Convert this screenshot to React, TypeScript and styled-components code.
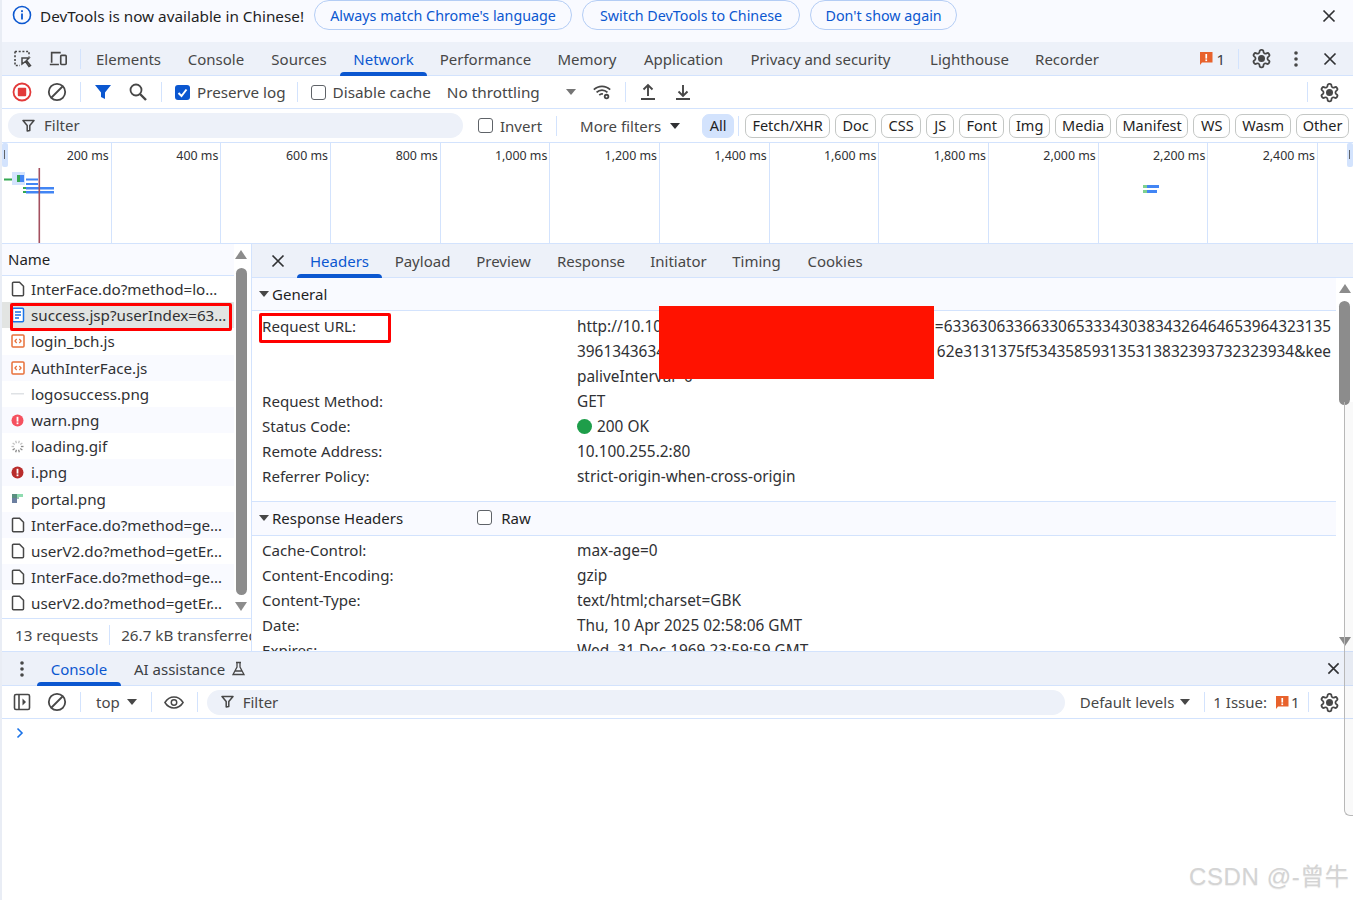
import React from "react";
import styled, { createGlobalStyle } from "styled-components";

const Global = createGlobalStyle`
  html, body { margin: 0; padding: 0; background: #fff; }
  body { font-family: "Noto Sans", "Open Sans", sans-serif; color: #3c4043; overflow: hidden; }
  * { box-sizing: border-box; }
`;

const Page = styled.div`
  position: relative; width: 1353px; height: 900px; display: flex; flex-direction: column;
  border-left: 2px solid #e9edf5; overflow: hidden; font-size: 15px; white-space: nowrap;
`;
const InfoBar = styled.div`
  height: 42px; flex: none; background: #f9faff; display: flex; align-items: flex-start; padding: 0 14px 0 10px; color: #1f1f1f;
`;
const InfoText = styled.span`margin: 6px 10px 0 8px; line-height: 20px; font-size: 15.3px;`;
const InfoButton = styled.button<{ $w: number }>`
  width: ${(p) => p.$w}px; height: 30px; border: 1px solid #b4cdf5; border-radius: 15px; background: transparent; color: #0b57d0; font: inherit; font-size: 14.3px; padding: 0; margin-right: 10px;
`;
const Spacer = styled.div`flex: 1;`;
const IconBtn = styled.span<{ $ml?: number; $mt?: number }>`
  display: inline-flex; width: 20px; height: 20px; align-items: center; justify-content: center; flex: none; margin-left: ${(p) => p.$ml ?? 0}px; margin-top: ${(p) => p.$mt ?? 0}px;
`;
const TabBar = styled.div`
  height: 34px; flex: none; background: #edf1f9; border-bottom: 1px solid #d3e3fd; display: flex; align-items: center; padding-left: 11px; position: relative;
`;
const Sep = styled.div<{ $h?: number; $ml?: number; $mr?: number }>`
  width: 1px; height: ${(p) => p.$h ?? 20}px; background: #d3e3fd; flex: none; margin-left: ${(p) => p.$ml ?? 8}px; margin-right: ${(p) => p.$mr ?? 8}px;
`;
const Tab = styled.div<{ $active?: boolean; $w: number; $mr?: number }>`
  width: ${(p) => p.$w}px; margin-right: ${(p) => p.$mr ?? 0}px; flex: none; height: 100%; display: flex; align-items: center; justify-content: center; position: relative;
  color: ${(p) => (p.$active ? "#0b57d0" : "#474747")};
  &::after { content: ""; display: ${(p) => (p.$active ? "block" : "none")}; position: absolute; left: 0; right: 0; bottom: -1px; height: 4px; background: #0b57d0; border-radius: 4px 4px 0 0; }
`;
const Toolbar = styled.div<{ $h: number }>`
  height: ${(p) => p.$h}px; flex: none; background: #fff; border-bottom: 1px solid #d3e3fd; display: flex; align-items: center; padding-left: 10px; color: #474747;
`;
const Check = styled.span<{ $on?: boolean; $ml?: number }>`
  width: 15px; height: 15px; border-radius: 3px; flex: none; display: inline-flex; align-items: center; justify-content: center; margin: 0 7px 0 ${(p) => p.$ml ?? 0}px;
  border: ${(p) => (p.$on ? "none" : "1.3px solid #5f6368")}; background: ${(p) => (p.$on ? "#0b57d0" : "#fff")};
`;
const Label = styled.span<{ $ml?: number; $w?: number; $fs?: number }>`
  margin-left: ${(p) => p.$ml ?? 0}px; ${(p) => (p.$w ? `width:${p.$w}px;` : "")} ${(p) => (p.$fs ? `font-size:${p.$fs}px;` : "")} flex: none;
`;
const Caret = styled.span<{ $ml?: number; $c?: string }>`
  width: 0; height: 0; flex: none; border-left: 5px solid transparent; border-right: 5px solid transparent; border-top: 6px solid ${(p) => p.$c ?? "#474747"}; margin-left: ${(p) => p.$ml ?? 0}px;
`;
const FilterBar = styled.div`
  height: 34px; flex: none; border-bottom: 1px solid #d3e3fd; display: flex; align-items: center; padding-left: 6px; color: #474747;
`;
const FilterInput = styled.div<{ $w: number }>`
  width: ${(p) => p.$w}px; height: 25px; border-radius: 13px; background: #edf1f9; display: flex; align-items: center; padding: 0 0 1px 14px; gap: 9px; flex: none; color: #474747;
`;
const Chip = styled.span<{ $active?: boolean; $w: number; $mr?: number }>`
  width: ${(p) => p.$w}px; height: 24px; display: inline-flex; align-items: center; justify-content: center; flex: none; border-radius: 7px; margin-right: ${(p) => p.$mr ?? 5}px; color: #1f1f1f; font-size: 14.5px; padding-bottom: 1px;
  border: 1px solid ${(p) => (p.$active ? "#d3e3fd" : "#c4c7c5")}; background: ${(p) => (p.$active ? "#d3e3fd" : "#fff")};
`;
const Timeline = styled.div`
  height: 101px; flex: none; display: grid; grid-template-columns: repeat(12, 109.68px) 1fr; border-bottom: 1px solid #d3e3fd; position: relative;
`;
const Tick = styled.div`
  border-right: 1px solid #d3e3fd; text-align: right; font-size: 12.4px; padding: 4px 2px 0 0; line-height: 17px; color: #303134;
`;
const Handle = styled.span<{ $left: number }>`
  position: absolute; top: 0; left: ${(p) => p.$left}px; width: 6px; height: 24px; background: #d3e3fd; border-radius: 2px;
  &::after { content: ""; position: absolute; left: 2px; top: 7px; width: 1px; height: 9px; background: #5f6368; }
`;
const Wave = styled.svg`position: absolute; left: 0; top: 0;`;
const Split = styled.div`height: 407px; flex: none; display: flex; position: relative;`;
const ListPane = styled.div`
  width: 250px; flex: none; border-right: 1px solid #d3e3fd; display: flex; flex-direction: column; position: relative;
`;
const ListHead = styled.div`
  height: 32px; flex: none; display: flex; align-items: center; padding: 0 0 2px 6px; background: #f9faff; border-bottom: 1px solid #d3e3fd; width: 232px; color: #1f1f1f;
`;
const Rows = styled.div`width: 232px; flex: 1; display: flex; flex-direction: column; font-size: 15.2px;`;
const Row = styled.div<{ $odd?: boolean; $sel?: boolean }>`
  height: 26.2px; flex: none; display: flex; align-items: center; gap: 6px; padding-left: 8px; color: #303134;
  background: ${(p) => (p.$sel ? "#e2e4e2" : p.$odd ? "#f9faff" : "#fff")};
`;
const RowIcon = styled.span`width: 15px; height: 16px; flex: none; display: inline-flex; align-items: center; justify-content: center;`;
const ListStatus = styled.div`
  height: 33px; flex: none; border-top: 1px solid #d3e3fd; display: flex; align-items: center; padding-left: 13px; color: #474747; overflow: hidden; font-size: 15.2px;
`;
const VScroll = styled.div<{ $top: number; $left: number; $h: number }>`
  position: absolute; left: ${(p) => p.$left}px; top: ${(p) => p.$top}px; width: 11px; height: ${(p) => p.$h}px; background: #8c8c8c; border-radius: 6px;
`;
const Arrow = styled.span<{ $left: number; $top: number; $up?: boolean }>`
  position: absolute; left: ${(p) => p.$left}px; top: ${(p) => p.$top}px; width: 0; height: 0; border-left: 6px solid transparent; border-right: 6px solid transparent;
  ${(p) => (p.$up ? "border-bottom: 9px solid #8c8c8c;" : "border-top: 9px solid #8c8c8c;")}
`;
const Detail = styled.div`flex: 1; min-width: 0; display: flex; flex-direction: column; overflow: hidden; position: relative;`;
const DetailTabs = styled(TabBar)`padding-left: 16px; height: 34px;`;
const DetailBody = styled.div`flex: 1; min-height: 0; overflow: hidden; width: 1084px;`;
const SectionHead = styled.div`
  height: 33px; display: flex; align-items: center; background: #f9faff; border-bottom: 1px solid #d3e3fd; padding-left: 7px; color: #1f1f1f;
`;
const SectionHeadGap = styled(SectionHead)`border-top: 1px solid #d3e3fd; height: 35px; margin-top: 12px; padding-bottom: 2px;`;
const KV = styled.div<{ $pt: number }>`display: grid; grid-template-columns: 315px 1fr; padding: ${(p) => p.$pt}px 0 0 10px; color: #303134; font-size: 15.1px;`;
const Key = styled.div`line-height: 25px; height: 25px;`;
const Val = styled.div`line-height: 25px; height: 25px; display: flex; align-items: center; gap: 5px; font-size: 15.4px;`;
const UrlVal = styled.div`line-height: 25px; height: 75px; white-space: pre; display: flex; flex-direction: column; width: 754px; font-size: 15.4px;`;
const UrlLine = styled.div`display: flex; justify-content: space-between;`;
const StatusDot = styled.span`width: 15px; height: 15px; border-radius: 50%; background: #1e9e4a; flex: none;`;
const Redact = styled.div`position: absolute; left: 657px; top: 306px; width: 275px; height: 73px; background: #ff1200;`;
const Annot = styled.div<{ $l: number; $t: number; $w: number; $h: number }>`
  position: absolute; left: ${(p) => p.$l}px; top: ${(p) => p.$t}px; width: ${(p) => p.$w}px; height: ${(p) => p.$h}px; border: 3px solid #ff0000; border-radius: 2px;
`;
const DrawerBar = styled(TabBar)`border-top: 1px solid #d3e3fd; height: 35px; padding-left: 13px;`;
const ConsoleArea = styled.div`flex: 1; padding: 4px 0 0 14px; background: #fff;`;
const Track = styled.div`
  position: absolute; left: 1342px; top: 402px; width: 10px; height: 414px; border-left: 1px solid #b8b8b8; border-bottom: 1px solid #b8b8b8; border-radius: 0 0 0 6px; background: rgba(0, 0, 0, .025);
`;
const Watermark = styled.div`
  position: absolute; left: 1187px; top: 861px; font-family: "Liberation Sans", "Noto Sans CJK SC", sans-serif; font-size: 24px; line-height: 32px; color: #d4d4d4; letter-spacing: .6px; text-shadow: 0 1px 1px #eee;
`;

const S = { fill: "none", stroke: "#474747", strokeWidth: 1.6 };
const Close = ({ size = 14, c = "#303134" }: { size?: number; c?: string }) => (
  <svg width={size} height={size} viewBox="0 0 14 14"><path d="M1.5 1.5l11 11M12.5 1.5l-11 11" fill="none" stroke={c} strokeWidth="1.7" /></svg>
);
const Gear = () => (
  <svg width="21" height="21" viewBox="0 0 24 24" fill="none" stroke="#474747" strokeWidth="2"><path d="M12.22 2h-.44a2 2 0 0 0-2 2v.18a2 2 0 0 1-1 1.73l-.43.25a2 2 0 0 1-2 0l-.15-.08a2 2 0 0 0-2.73.73l-.22.38a2 2 0 0 0 .73 2.73l.15.1a2 2 0 0 1 1 1.72v.51a2 2 0 0 1-1 1.74l-.15.09a2 2 0 0 0-.73 2.73l.22.38a2 2 0 0 0 2.73.73l.15-.08a2 2 0 0 1 2 0l.43.25a2 2 0 0 1 1 1.73V20a2 2 0 0 0 2 2h.44a2 2 0 0 0 2-2v-.18a2 2 0 0 1 1-1.73l.43-.25a2 2 0 0 1 2 0l.15.08a2 2 0 0 0 2.73-.73l.22-.39a2 2 0 0 0-.73-2.73l-.15-.08a2 2 0 0 1-1-1.74v-.5a2 2 0 0 1 1-1.74l.15-.09a2 2 0 0 0 .73-2.73l-.22-.38a2 2 0 0 0-2.73-.73l-.15.08a2 2 0 0 1-2 0l-.43-.25a2 2 0 0 1-1-1.73V4a2 2 0 0 0-2-2z" /><circle cx="12" cy="12" r="3" fill="#474747" /></svg>
);
const Dots = () => (
  <svg width="4" height="16" viewBox="0 0 4 16"><circle cx="2" cy="2" r="1.8" fill="#474747" /><circle cx="2" cy="8" r="1.8" fill="#474747" /><circle cx="2" cy="14" r="1.8" fill="#474747" /></svg>
);
const Block = () => (
  <svg width="20" height="20" viewBox="0 0 20 20"><circle cx="10" cy="10" r="8.2" fill="none" stroke="#474747" strokeWidth="1.8" /><path d="M4.5 15.5l11-11" fill="none" stroke="#474747" strokeWidth="1.8" /></svg>
);
const Funnel = ({ c = "#474747" }: { c?: string }) => (
  <svg width="13" height="13" viewBox="0 0 13 13"><path d="M1 1.5h11L7.8 6.6v5L5.2 12V6.6z" fill="none" stroke={c} strokeWidth="1.5" strokeLinejoin="round" /></svg>
);
const IssueIcon = () => (
  <svg width="14" height="15" viewBox="0 0 14 15"><path d="M1 1h12.5v10.5H3L1 14z" fill="#e8622c" /><rect x="6.4" y="3" width="1.7" height="4.6" fill="#fff" /><rect x="6.4" y="8.4" width="1.7" height="1.7" fill="#fff" /></svg>
);
const DocIcon = () => (
  <svg width="14" height="16" viewBox="0 0 14 16"><path d="M1.5 2.2a1 1 0 0 1 1-1h6l4 4v8.6a1 1 0 0 1-1 1h-9a1 1 0 0 1-1-1z" fill="#fff" stroke="#474747" strokeWidth="1.5" /></svg>
);
const HtmlIcon = () => (
  <svg width="14" height="16" viewBox="0 0 14 16"><rect x="1.5" y="1.2" width="11" height="13.6" rx="1" fill="#fff" stroke="#1a73e8" strokeWidth="1.5" /><path d="M4 5h6M4 8h6M4 11h4" stroke="#1a73e8" strokeWidth="1.4" /></svg>
);
const JsIcon = () => (
  <svg width="14" height="14" viewBox="0 0 14 14"><rect x="1" y="1" width="12" height="12" rx="1" fill="#fff" stroke="#e8703a" strokeWidth="1.5" /><path d="M5.7 5L3.9 7l1.8 2M8.3 5l1.8 2-1.8 2" fill="none" stroke="#e8703a" strokeWidth="1.2" /></svg>
);
const RedIcon = ({ c }: { c: string }) => (
  <svg width="13" height="13" viewBox="0 0 13 13"><circle cx="6.5" cy="6.5" r="6" fill={c} /><rect x="5.6" y="2.8" width="1.8" height="4.8" fill="#fff" /><rect x="5.6" y="8.4" width="1.8" height="1.8" fill="#fff" /></svg>
);
const Spinner = () => (
  <svg width="13" height="13" viewBox="0 0 13 13">
    {Array.from({ length: 10 }).map((_, i) => {
      const a = (i / 10) * Math.PI * 2;
      return <path key={i} d={`M${6.5 + Math.cos(a) * 3.4} ${6.5 + Math.sin(a) * 3.4}L${6.5 + Math.cos(a) * 6} ${6.5 + Math.sin(a) * 6}`} stroke={i < 5 ? "#8a8a8a" : "#c4c4c4"} strokeWidth="1.3" />;
    })}
  </svg>
);
const PortalIcon = () => (
  <svg width="13" height="13" viewBox="0 0 13 13"><rect x="1" y="2" width="5" height="4" fill="#5a8f80" /><rect x="6" y="2" width="6" height="3" fill="#8fdcb0" /><rect x="1" y="6" width="5" height="5" fill="#6c7fa0" /><rect x="6" y="5" width="2" height="2" fill="#9cc8b4" /></svg>
);
const LogoIcon = () => <svg width="13" height="4" viewBox="0 0 13 4"><rect x="0" y="1" width="13" height="1.5" fill="#dfe2e5" /></svg>;

const tabs: [string, number, boolean?, number?][] = [["Elements", 91], ["Console", 84], ["Sources", 82], ["Network", 87, true], ["Performance", 117], ["Memory", 86], ["Application", 107], ["Privacy and security", 167, false, 13], ["Lighthouse", 105], ["Recorder", 90]];
const chips: [string, number][] = [["Fetch/XHR", 85], ["Doc", 41], ["CSS", 40], ["JS", 28], ["Font", 45], ["Img", 41], ["Media", 56], ["Manifest", 72], ["WS", 37], ["Wasm", 56], ["Other", 53]];
const ticks = ["200", "400", "600", "800", "1,000", "1,200", "1,400", "1,600", "1,800", "2,000", "2,200", "2,400"];
const rows: [React.ReactNode, string][] = [
  [<DocIcon />, "InterFace.do?method=lo…"],
  [<HtmlIcon />, "success.jsp?userIndex=63…"],
  [<JsIcon />, "login_bch.js"],
  [<JsIcon />, "AuthInterFace.js"],
  [<LogoIcon />, "logosuccess.png"],
  [<RedIcon c="#f5515f" />, "warn.png"],
  [<Spinner />, "loading.gif"],
  [<RedIcon c="#b92c2c" />, "i.png"],
  [<PortalIcon />, "portal.png"],
  [<DocIcon />, "InterFace.do?method=ge…"],
  [<DocIcon />, "userV2.do?method=getEr…"],
  [<DocIcon />, "InterFace.do?method=ge…"],
  [<DocIcon />, "userV2.do?method=getEr…"],
];
const detailTabs: [string, number, boolean?][] = [["Headers", 85, true], ["Payload", 81], ["Preview", 81], ["Response", 94], ["Initiator", 81], ["Timing", 75], ["Cookies", 82]];
const general: [string, React.ReactNode][] = [
  ["Request Method:", "GET"],
  ["Status Code:", <><StatusDot />200 OK</>],
  ["Remote Address:", "10.100.255.2:80"],
  ["Referrer Policy:", "strict-origin-when-cross-origin"],
];
const resp: [string, string][] = [
  ["Cache-Control:", "max-age=0"],
  ["Content-Encoding:", "gzip"],
  ["Content-Type:", "text/html;charset=GBK"],
  ["Date:", "Thu, 10 Apr 2025 02:58:06 GMT"],
  ["Expires:", "Wed, 31 Dec 1969 23:59:59 GMT"],
];

export default function App() {
  return (
    <Page>
      <Global />
      <InfoBar>
        <IconBtn $mt={5}><svg width="20" height="20" viewBox="0 0 20 20"><circle cx="10" cy="10" r="8.5" fill="none" stroke="#0b57d0" strokeWidth="1.6" /><rect x="9.1" y="8.5" width="1.8" height="6" fill="#0b57d0" /><rect x="9.1" y="5.2" width="1.8" height="1.9" fill="#0b57d0" /></svg></IconBtn>
        <InfoText>DevTools is now available in Chinese!</InfoText>
        <InfoButton $w={258}>Always match Chrome's language</InfoButton>
        <InfoButton $w={218}>Switch DevTools to Chinese</InfoButton>
        <InfoButton $w={147}>Don't show again</InfoButton>
        <Spacer />
        <IconBtn $mt={6}><Close /></IconBtn>
      </InfoBar>
      <TabBar>
        <IconBtn><svg width="20" height="20" viewBox="0 0 20 20"><path d="M2 2.5h14v5M2 2.5v14h5" fill="none" stroke="#474747" strokeWidth="1.6" strokeDasharray="2 1.7" /><path d="M9 9h7l-2.5 2.500 4 5-1.500 1-3.500-5L9 15z" fill="none" stroke="#474747" strokeWidth="1.5" /></svg></IconBtn>
        <IconBtn $ml={15}><svg width="22" height="20" viewBox="0 0 22 20"><path d="M4 14V3h10M2 16h10" fill="none" stroke="#474747" strokeWidth="1.8" /><rect x="14" y="6" width="6" height="10" rx="1" fill="none" stroke="#474747" strokeWidth="1.8" /></svg></IconBtn>
        <Sep $ml={12} $mr={2} />
        {tabs.map(([t, w, a, m]) => <Tab key={t} $w={w} $active={a} $mr={m}>{t}</Tab>)}
        <Spacer />
        <IssueIcon />
        <Label $ml={3}>1</Label>
        <Sep $ml={13} $mr={12} />
        <Gear />
        <IconBtn $ml={14}><Dots /></IconBtn>
        <IconBtn $ml={14}><Close /></IconBtn>
        <Label $w={13} />
      </TabBar>
      <Toolbar $h={33}>
        <IconBtn><svg width="20" height="20" viewBox="0 0 20 20"><circle cx="10" cy="10" r="8.5" fill="none" stroke="#e23a3a" strokeWidth="1.8" /><rect x="5.8" y="5.8" width="8.4" height="8.4" rx="1" fill="#e23a3a" /></svg></IconBtn>
        <IconBtn $ml={15}><Block /></IconBtn>
        <Sep $ml={13} $mr={12} />
        <IconBtn><svg width="18" height="18" viewBox="0 0 18 18"><path d="M1 2h16l-6 7.500V16l-4-2V9.500z" fill="#0b57d0" /></svg></IconBtn>
        <IconBtn $ml={15}><svg width="20" height="20" viewBox="0 0 20 20"><circle cx="8" cy="8" r="5.500" fill="none" stroke="#474747" strokeWidth="1.8" /><path d="M12 12l6 6" fill="none" stroke="#474747" strokeWidth="2.4" /></svg></IconBtn>
        <Sep $ml={13} $mr={13} />
        <Check $on><svg width="13" height="13" viewBox="0 0 13 13"><path d="M2.5 7l3 3 5-6.500" fill="none" stroke="#fff" strokeWidth="2" /></svg></Check>
        <Label $fs={15.2}>Preserve log</Label>
        <Sep $ml={11} $mr={13} />
        <Check />
        <Label $fs={15.3}>Disable cache</Label>
        <Label $ml={16} $w={119} $fs={15.3}>No throttling</Label>
        <Caret $c="#757575" />
        <IconBtn $ml={16}><svg width="22" height="20" viewBox="0 0 22 20"><path d="M2 7.500c5-5 13-5 18 0M5 10.500c3.500-3.500 8.500-3.500 12 0M8 13.500c1.500-1.500 3-1.500 4-1.200" fill="none" stroke="#474747" strokeWidth="1.9" /><circle cx="16" cy="15" r="3" fill="#474747" /><circle cx="16" cy="15" r="1" fill="#fff" /></svg></IconBtn>
        <Sep $ml={13} $mr={12} />
        <IconBtn><svg width="18" height="18" viewBox="0 0 18 18"><path d="M9 13V2M4.500 6.500L9 2l4.500 4.500M2 16h14" fill="none" stroke="#474747" strokeWidth="1.9" /></svg></IconBtn>
        <IconBtn $ml={15}><svg width="18" height="18" viewBox="0 0 18 18"><path d="M9 2v11M4.500 8.500L9 13l4.500-4.500M2 16h14" fill="none" stroke="#474747" strokeWidth="1.9" /></svg></IconBtn>
        <Spacer />
        <Sep $ml={0} $mr={11} />
        <Gear />
        <Label $w={13} />
      </Toolbar>
      <FilterBar>
        <FilterInput $w={455}><Funnel />Filter</FilterInput>
        <Check $ml={15} />
        <Label>Invert</Label>
        <Sep $ml={14} $mr={23} />
        <Label>More filters</Label>
        <Caret $ml={9} $c="#303134" />
        <Label $w={22} />
        <Chip $active $w={32} $mr={0}>All</Chip>
        <Sep $ml={4} $mr={6} $h={20} />
        {chips.map(([t, w]) => <Chip key={t} $w={w}>{t}</Chip>)}
      </FilterBar>
      <Timeline>
        {ticks.map((t) => <Tick key={t}>{t} ms</Tick>)}
        <div />
        <Handle $left={0} />
        <Handle $left={1345} />
        <Wave width="1350" height="100" viewBox="0 0 1350 100">
          <rect x="10" y="29" width="13" height="13" fill="#d3e3fd" />
          <rect x="2" y="35.5" width="8" height="2" fill="#34a853" />
          <rect x="15" y="32" width="3" height="7" fill="#34a853" />
          <rect x="18" y="32" width="4" height="7" fill="#4285f4" />
          <rect x="24" y="35.5" width="12" height="2" fill="#4285f4" />
          <rect x="24" y="40" width="12" height="2" fill="#4285f4" />
          <rect x="21" y="44" width="3" height="2" fill="#34a853" />
          <rect x="21" y="48" width="3" height="2" fill="#34a853" />
          <rect x="24" y="44" width="28" height="2.5" fill="#4285f4" />
          <rect x="24" y="48" width="28" height="2.5" fill="#4285f4" />
          <rect x="1141" y="42" width="4" height="3" fill="#7fd18f" />
          <rect x="1141" y="47" width="4" height="3" fill="#7fd18f" />
          <rect x="1145" y="42" width="12" height="3" fill="#4285f4" />
          <rect x="1145" y="47" width="10" height="3" fill="#4285f4" />
          <rect x="36.5" y="25" width="1.6" height="75" fill="#a4505f" />
        </Wave>
      </Timeline>
      <Split>
        <ListPane>
          <ListHead>Name</ListHead>
          <Rows>
            {rows.map(([i, t], n) => (
              <Row key={n} $odd={n % 2 === 1} $sel={n === 1}><RowIcon>{i}</RowIcon>{t}</Row>
            ))}
          </Rows>
          <ListStatus>13 requests<Sep $ml={11} $mr={11} $h={20} />26.7 kB transferred</ListStatus>
          <Arrow $left={233} $top={6} $up />
          <VScroll $left={234} $top={24} $h={327} />
          <Arrow $left={233} $top={358} />
        </ListPane>
        <Detail>
          <DetailTabs>
            <IconBtn><Close size={14} /></IconBtn>
            <Label $w={9} />
            {detailTabs.map(([t, w, a]) => <Tab key={t} $w={w} $active={a}>{t}</Tab>)}
          </DetailTabs>
          <DetailBody>
            <SectionHead><Caret /><Label $ml={3}>General</Label></SectionHead>
            <KV $pt={3}>
              <Key>Request URL:</Key>
              <UrlVal>
                <UrlLine><span>http://10.10</span><span>=63363063366330653334303834326464653964323135</span></UrlLine>
                <UrlLine><span>3961343634</span><span>62e3131375f534358593135313832393732323934&amp;kee</span></UrlLine>
                <div>paliveInterval=0</div>
              </UrlVal>
              {general.map(([k, v]) => <React.Fragment key={k}><Key>{k}</Key><Val>{v}</Val></React.Fragment>)}
            </KV>
            <SectionHeadGap>
              <Caret /><Label $ml={3}>Response Headers</Label>
              <Check $ml={74} />
              <Label $ml={2}>Raw</Label>
            </SectionHeadGap>
            <KV $pt={2}>
              {resp.map(([k, v]) => <React.Fragment key={k}><Key>{k}</Key><Val>{v}</Val></React.Fragment>)}
            </KV>
          </DetailBody>
          <Arrow $left={1087} $top={40} $up />
          <VScroll $left={1087} $top={57} $h={104} />
          <Arrow $left={1087} $top={393} />
        </Detail>
      </Split>
      <DrawerBar>
        <IconBtn $ml={-3}><Dots /></IconBtn>
        <Label $w={5} />
        <Tab $w={84} $active>Console</Tab>
        <Label $ml={13}>AI assistance</Label>
        <IconBtn $ml={3}><svg width="15" height="15" viewBox="0 0 15 15"><path d="M5 1.500h5M6 1.500v4.500l-4 7.500h11l-4-7.500V1.500M4 10h7" fill="none" stroke="#474747" strokeWidth="1.3" /></svg></IconBtn>
        <Spacer />
        <IconBtn><Close size={13} /></IconBtn>
        <Label $w={10} />
      </DrawerBar>
      <Toolbar $h={33}>
        <IconBtn><svg width="18" height="18" viewBox="0 0 18 18"><rect x="1.5" y="1.5" width="15" height="15" rx="1.5" fill="none" stroke="#474747" strokeWidth="1.6" /><path d="M6 1.500v15" stroke="#474747" strokeWidth="1.6" /><path d="M9.500 5.500l3.500 3.500-3.500 3.500z" fill="#474747" /></svg></IconBtn>
        <IconBtn $ml={15}><Block /></IconBtn>
        <Sep $ml={13} $mr={15} />
        <Label>top</Label>
        <Caret $ml={7} />
        <Sep $ml={14} $mr={12} />
        <IconBtn><svg width="24" height="17" viewBox="0 0 22 16"><path d="M1 8c5-8 15-8 20 0c-5 8-15 8-20 0z" {...S} /><circle cx="11" cy="8" r="3" {...S} /></svg></IconBtn>
        <Sep $ml={13} $mr={9} />
        <FilterInput $w={858}><Funnel />Filter</FilterInput>
        <Label $ml={15}>Default levels</Label>
        <Caret $ml={6} />
        <Sep $ml={14} $mr={8} />
        <Label>1 Issue:</Label>
        <Label $ml={8} />
        <IssueIcon />
        <Label $ml={2}>1</Label>
        <Sep $ml={8} $mr={10} />
        <Gear />
      </Toolbar>
      <ConsoleArea><svg width="8" height="12" viewBox="0 0 8 12"><path d="M1.500 1.500L6 6l-4.500 4.500" fill="none" stroke="#1a73e8" strokeWidth="1.6" /></svg></ConsoleArea>
      <Redact />
      <Annot $l={8} $t={303} $w={222} $h={28} />
      <Annot $l={257} $t={313} $w={132} $h={30} />
      <Track />
      <Watermark>CSDN @-曾牛</Watermark>
    </Page>
  );
}
